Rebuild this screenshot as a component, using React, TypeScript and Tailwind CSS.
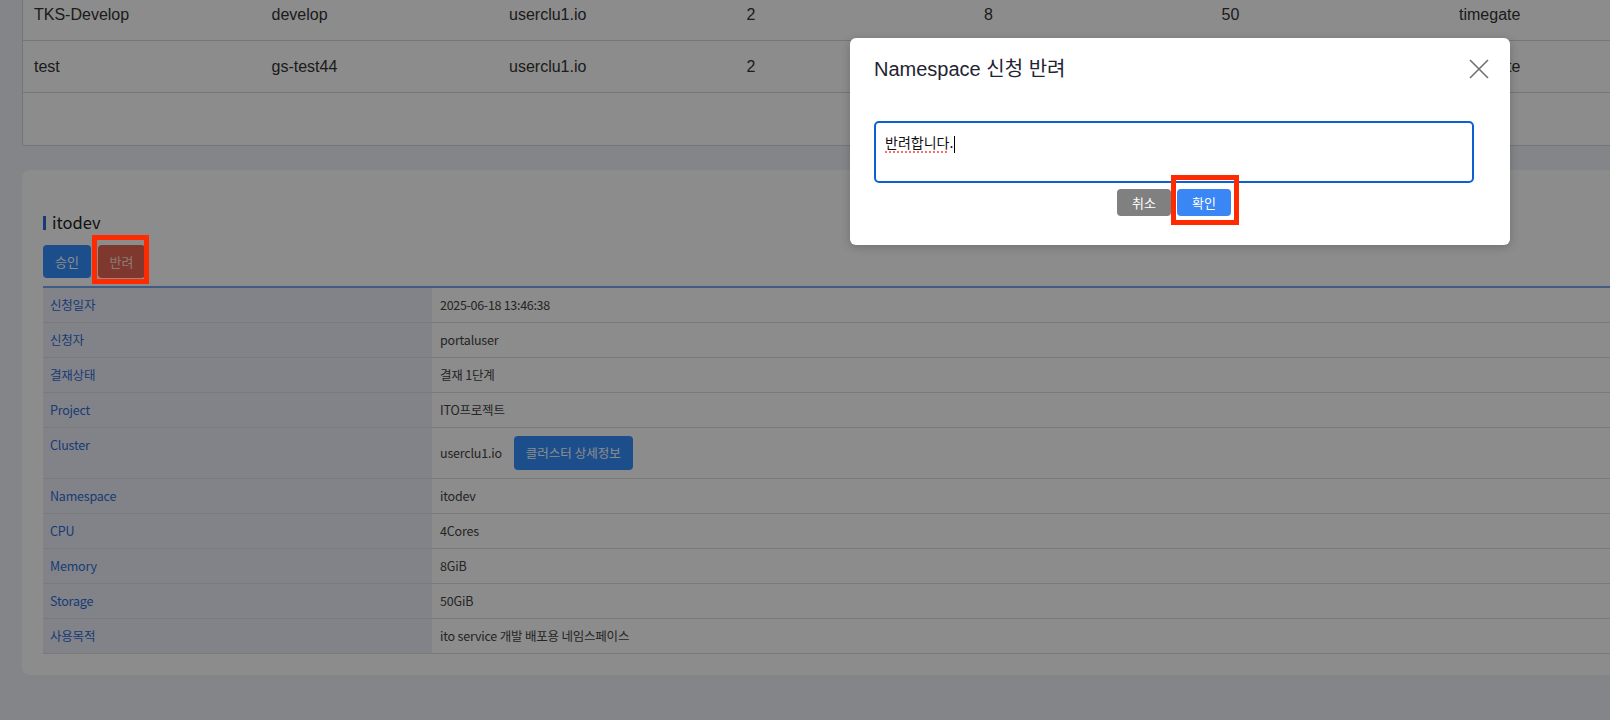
import React from 'react';

const topRows = [
  ['TKS-Develop', 'develop', 'userclu1.io', '2', '8', '50', 'timegate'],
  ['test', 'gs-test44', 'userclu1.io', '2', '8', '50', 'timegate'],
];

const details: { label: string; value: string; cluster?: boolean; tight?: boolean }[] = [
  { label: '신청일자', value: '2025-06-18 13:46:38', tight: true },
  { label: '신청자', value: 'portaluser' },
  { label: '결재상태', value: '결재 1단계' },
  { label: 'Project', value: 'ITO프로젝트' },
  { label: 'Cluster', value: 'userclu1.io', cluster: true },
  { label: 'Namespace', value: 'itodev' },
  { label: 'CPU', value: '4Cores' },
  { label: 'Memory', value: '8GiB' },
  { label: 'Storage', value: '50GiB' },
  { label: '사용목적', value: 'ito service 개발 배포용 네임스페이스' },
];

const kr = 'font-["Noto_Sans_CJK_KR",sans-serif]';

export default function App() {
  return (
    <div className="relative h-[720px] w-full overflow-hidden bg-[#f1f3f8]">
      <div className="w-[1700px] pl-[22px]">
        {/* namespace list */}
        <div className='-mt-[11px] border border-t-0 border-[#d8d8d8] bg-white font-["Liberation_Sans",Arial,sans-serif] text-[16px] text-[#333]'>
          {topRows.map((row, i) => (
            <div key={i} className="grid h-[52px] grid-cols-[repeat(7,237.5px)] border-b border-[#d8d8d8] pl-[11px]">
              {row.map((cell, j) => (
                <div key={j} className="flex items-center">{cell}</div>
              ))}
            </div>
          ))}
          <div className="h-[52px]" />
        </div>

        {/* detail */}
        <div className={`mt-[24px] rounded-lg bg-white px-[21px] pt-[39px] pb-[21px] ${kr}`}>
          <div className="flex h-[27px] items-center gap-[6px]">
            <span className="h-[14px] w-[3px] bg-[#2f6bd6]" />
            <span className="text-[16.5px] text-[#222]">itodev</span>
          </div>
          <div className="mt-[9px] flex gap-[7px] text-[13px]">
            <button className="h-[33px] w-[48px] rounded-[4px] bg-[#338eff] text-white">승인</button>
            <button className="h-[33px] w-[47px] rounded-[4px] bg-[#e56652] text-white/80">반려</button>
          </div>
          <div className="mt-[8px] border-t-2 border-[#7aa7ee] text-[12.5px] tracking-[-0.2px]">
            {details.map((d) => (
              <div key={d.label} className="flex border-b border-[#dedede]">
                <div className="w-[389px] shrink-0 bg-[#eceff7] px-[7px] py-[8px] leading-[18px] text-[#2f6bd6]">
                  {d.label}
                </div>
                <div className="flex flex-1 items-center px-[8px] py-[8px] leading-[18px] text-[#444]">
                  <span className={d.tight ? 'tracking-[-0.3px]' : ''}>{d.value}</span>
                  {d.cluster && (
                    <button className="ml-[12px] h-[34px] rounded-[4px] bg-[#338eff] px-[12px] tracking-normal text-white">
                      클러스터 상세정보
                    </button>
                  )}
                </div>
              </div>
            ))}
          </div>
        </div>
      </div>

      {/* backdrop */}
      <div className="absolute inset-0 z-10 bg-black/45" />

      {/* reject modal */}
      <div className="absolute top-[38px] left-[850px] z-20 w-[660px] rounded-md bg-white pt-[18px] pb-[29px] shadow-[0_2px_10px_rgba(0,0,0,0.2)]">
        <div className="flex items-center justify-between pr-[21px] pl-[24px]">
          <h2 className='font-["Liberation_Sans","Noto_Sans_CJK_KR",sans-serif] text-[20px] leading-[26px] text-[#1f2433]'>
            Namespace 신청 반려
          </h2>
          <svg width="20" height="20" viewBox="0 0 20 20" className="text-[#707070]">
            <path d="M1 1L19 19M19 1L1 19" stroke="currentColor" strokeWidth="1.6" fill="none" />
          </svg>
        </div>
        <div className={`mt-[39px] box-content w-[600px] pl-[24px] ${kr}`}>
          <div className="h-[62px] rounded-[5px] border-2 border-[#0b61d4] px-[9px] pt-[9px] text-[14px] leading-[20px] text-[#111]">
            <span className="underline decoration-[#ff6b6b] decoration-dotted decoration-2 underline-offset-[3px]">반려합니다</span>
            .
            <span className="ml-px inline-block h-[17px] w-px bg-black align-middle" />
          </div>
          <div className="mt-[6px] flex justify-center gap-[6px] text-[13px] text-white">
            <button className="h-[27px] w-[54px] rounded-[4px] bg-[#808080]">취소</button>
            <button className="h-[27px] w-[54px] rounded-[4px] bg-[#3a86f5]">확인</button>
          </div>
        </div>
      </div>

      {/* annotation boxes */}
      <div className="absolute top-[235px] left-[92px] z-30 h-[49px] w-[57px] border-[5px] border-[#ff2a00]" />
      <div className="absolute top-[175px] left-[1171px] z-30 h-[50px] w-[68px] border-[5px] border-[#ff2a00]" />
    </div>
  );
}
